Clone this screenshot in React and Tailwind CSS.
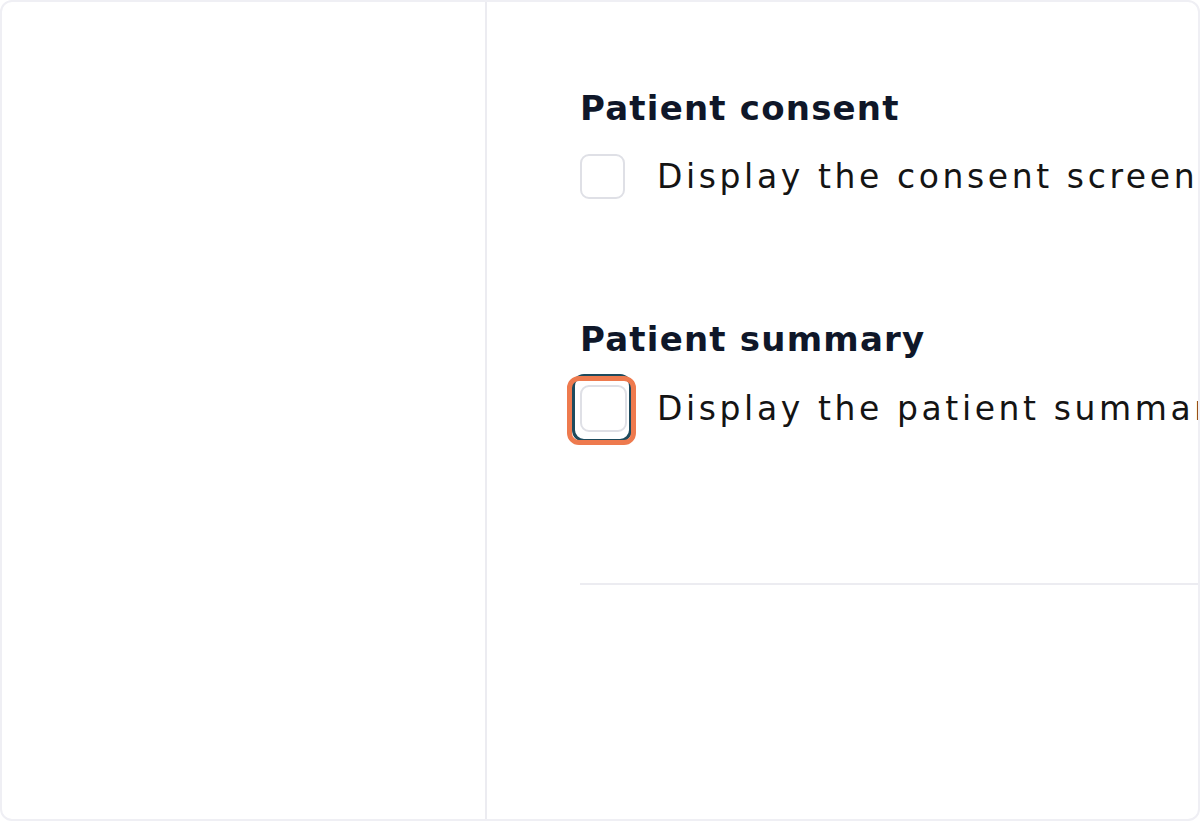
export default function App() {
  const font = { fontFamily: '"DejaVu Sans", "Noto Sans", sans-serif' }

  return (
    <div className="w-[1200px] h-[821px] bg-white overflow-hidden" style={font}>
      <div className="flex h-full rounded-[12px] border-2 border-[#efeff4] overflow-hidden">
        <div className="w-[485px] shrink-0 border-r-2 border-[#ececf1]" />

        <div className="flex-1 min-w-0 overflow-hidden pl-[93px] pt-[86px]">
          <h2 className="text-[34px] leading-[40px] font-bold tracking-[1.2px] text-[#0f1729] whitespace-nowrap">
            Patient consent
          </h2>
          <div className="mt-[26px] flex items-center gap-[32px] whitespace-nowrap">
            <div className="w-[45px] h-[45px] shrink-0 rounded-[9px] border-2 border-[#dfe0e6] bg-white" />
            <span className="text-[33px] leading-[40px] tracking-[3.6px] text-[#141414]">
              Display the consent screen
            </span>
          </div>

          <h2 className="mt-[120px] text-[34px] leading-[40px] font-bold tracking-[1.2px] text-[#0f1729] whitespace-nowrap">
            Patient summary
          </h2>
          <div className="mt-[26px] flex items-center gap-[30px] whitespace-nowrap">
            <div className="relative w-[47px] h-[47px] shrink-0">
              <div className="absolute -left-[8px] -top-[11px] -right-[5px] -bottom-[10px] rounded-[12px] border-[3px] border-[#1d4a5d]" />
              <div className="absolute -left-[13px] -top-[9px] -right-[9px] -bottom-[13px] rounded-[12px] border-[5px] border-[#ee7a4e]" />
              <div className="absolute inset-0 rounded-[9px] border-2 border-[#dfe0e6] bg-white" />
            </div>
            <span className="text-[33px] leading-[40px] tracking-[3.6px] text-[#141414]">
              Display the patient summary
            </span>
          </div>

          <div className="mt-[151px] h-[2px] w-[800px] bg-[#ececf1]" />
        </div>
      </div>
    </div>
  )
}
